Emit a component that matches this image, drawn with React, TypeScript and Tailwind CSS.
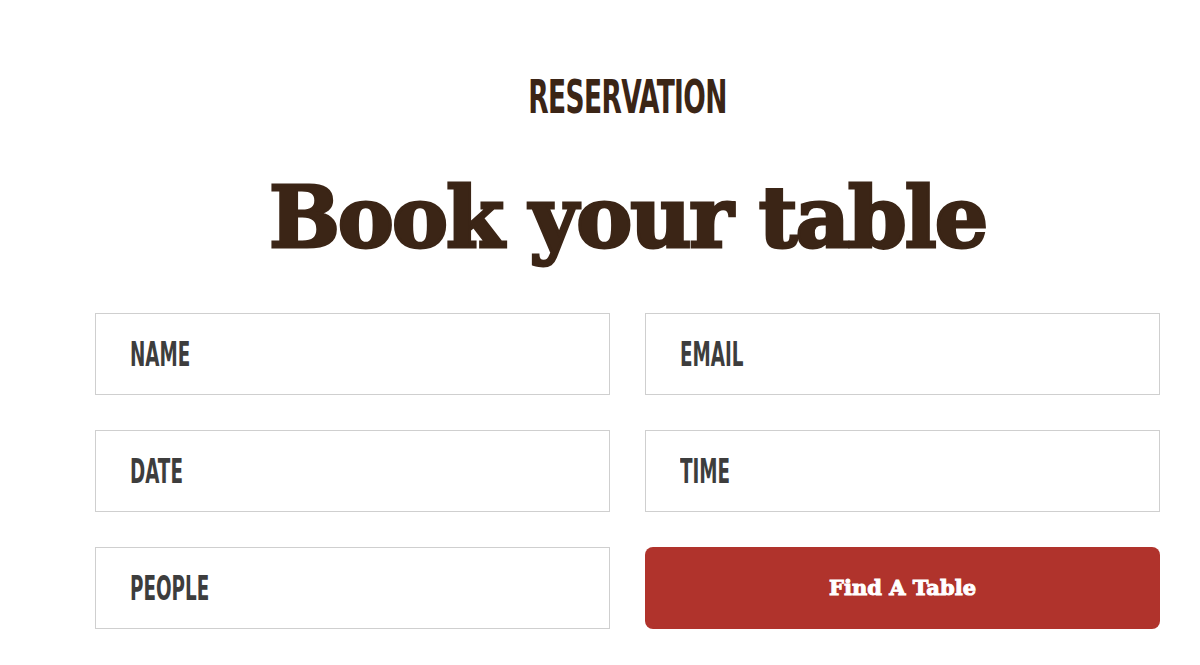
import React from "react";

const fields = [
  { name: "name", label: "NAME" },
  { name: "email", label: "EMAIL" },
  { name: "date", label: "DATE" },
  { name: "time", label: "TIME" },
  { name: "people", label: "PEOPLE" },
];

export default function App() {
  return (
    <div className="min-h-[665px] w-[1200px] bg-white overflow-hidden">
      <div className="ml-[95px] w-[1065px] pt-[72px]">
        {/* Section heading */}
        <h3 className="text-center text-[46px] leading-[50px] font-bold text-[#3b2516] tracking-[-1px] font-['DejaVu_Sans_Condensed','DejaVu_Sans',sans-serif] scale-x-[0.64]">
          RESERVATION
        </h3>
        <h2 className="mt-[46px] text-center text-[84px] leading-[100px] font-black text-[#3b2516] tracking-[-2px] [-webkit-text-stroke:3px_#3b2516] font-['DejaVu_Serif','Liberation_Serif',serif]">
          Book your table
        </h2>

        {/* Form */}
        <form className="mt-[45px] grid grid-cols-2 gap-x-[35px] gap-y-[35px]">
          {fields.map((f) => (
            <label
              key={f.name}
              className="flex h-[82px] w-full items-center border border-[#cfcfcf] bg-white pl-[34px]"
            >
              <span className="origin-left scale-x-[0.6] whitespace-nowrap text-[34px] font-bold text-[#3d3d3d] font-['DejaVu_Sans_Condensed','DejaVu_Sans',sans-serif]">
                {f.label}
              </span>
            </label>
          ))}
          <button
            type="button"
            className="h-[82px] w-full rounded-[8px] bg-[#b0332c] text-[21px] font-black text-white [-webkit-text-stroke:1px_#ffffff] font-['DejaVu_Serif','Liberation_Serif',serif]"
          >
            Find A Table
          </button>
        </form>
      </div>
    </div>
  );
}
